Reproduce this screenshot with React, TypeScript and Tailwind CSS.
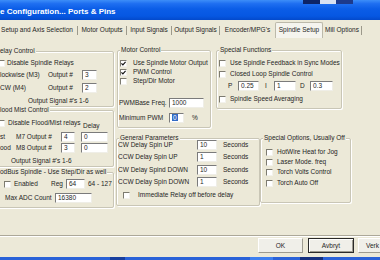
import type { ReactNode } from 'react';

function Check({ checked = false, className = '' }: { checked?: boolean; className?: string }) {
  return (
    <span
      className={`w-[7px] h-[7px] shrink-0 flex items-center justify-center bg-white border border-t-[#7d7b70] border-l-[#7d7b70] border-r-[#f3f2ec] border-b-[#f3f2ec] ${className}`}
    >
      {checked && (
        <svg width="5" height="5" viewBox="0 0 5 5">
          <path d="M0.4 2.3 L1.9 3.9 L4.6 0.9" stroke="#111" strokeWidth="1.2" fill="none" />
        </svg>
      )}
    </span>
  );
}

function Field({ className = '', children }: { className?: string; children?: ReactNode }) {
  return (
    <span
      className={`h-[10px] shrink-0 bg-white pl-[2px] leading-[8px] whitespace-nowrap overflow-hidden border border-t-[#7b7b7b] border-l-[#7b7b7b] border-r-[#efeee7] border-b-[#efeee7] ${className}`}
    >
      {children}
    </span>
  );
}

function Group({ label, className = '', children }: { label: string; className?: string; children: ReactNode }) {
  return (
    <div
      className={`relative shrink-0 border border-[#c9c6b6] rounded-[2px] shadow-[inset_1px_1px_0_#fff,1px_1px_0_#fff] ${className}`}
    >
      <span className="absolute top-[-5px] left-[2px] px-[1px] bg-[#ece9d8] leading-[8px] whitespace-nowrap">
        {label}
      </span>
      {children}
    </div>
  );
}

function CheckRow({ label, checked = false, className = '', gap = 'ml-[6px]' }: { label: string; checked?: boolean; className?: string; gap?: string }) {
  return (
    <div className={`h-[8px] flex items-center whitespace-nowrap overflow-hidden ${className}`}>
      <Check checked={checked} />
      <span className={gap}>{label}</span>
    </div>
  );
}

const tabs = [
  { name: 'Motor Outputs', w: 'w-[48px]' },
  { name: 'Input Signals', w: 'w-[44px]' },
  { name: 'Output Signals', w: 'w-[47px]' },
];

const delays = [
  { l: 'CW Delay Spin UP', v: '10', m: 'mt-[1px]' },
  { l: 'CCW Delay Spin UP', v: '1', m: 'mt-[2px]' },
  { l: 'CW Delay Spind DOWN', v: '10', m: 'mt-[3px]' },
  { l: 'CCW Delay Spin DOWN', v: '1', m: 'mt-[2px]' },
];

export default function App() {
  return (
    <div className="w-[380px] h-[260px] overflow-hidden relative flex flex-col bg-[#ece9d8] text-[#1e1e1e] text-[6.5px] leading-[8px] font-['Liberation_Sans',Arial,sans-serif]">
      {/* title bar */}
      <div className="h-[20px] shrink-0 relative flex items-center bg-[linear-gradient(180deg,#3d8ef8_0%,#1f6ff1_18%,#0b5de7_45%,#0657e2_80%,#0349cb_100%)]">
        <span className="mt-[3px] text-white font-bold text-[8px] whitespace-nowrap">
          e Configuration... Ports &amp; Pins
        </span>
        <div className="absolute top-0 left-[303px] h-[4px] flex">
          <span className="w-[17px] bg-[#0d2466]" />
          <span className="w-[16px] bg-[#d9e2f2]" />
          <span className="w-[17px] bg-[#1d3a8c]" />
        </div>
      </div>

      {/* tabs */}
      <div className="h-[18px] shrink-0 flex whitespace-nowrap">
        <div className="w-[77px] flex justify-end pr-[4px] pt-[6px]">Setup and Axis Selection</div>
        <span className="w-[1px] h-[9px] mt-[6px] bg-[#9c998b]" />
        {tabs.map((t) => (
          <div key={t.name} className="flex">
            <div className={`${t.w} flex justify-center pt-[6px]`}>{t.name}</div>
            <span className="w-[1px] h-[9px] mt-[6px] bg-[#9c998b]" />
          </div>
        ))}
        <div className="w-[55px] flex justify-center pt-[6px]">Encoder/MPG's</div>
        <div className="w-[48px] mt-[2px] flex justify-center pt-[3px] bg-[#f5f4ee] border-x border-t border-[#bcb9aa] rounded-t-[2px]">
          Spindle Setup
        </div>
        <div className="w-[38px] flex justify-center pt-[6px]">Mill Options</div>
        <span className="w-[1px] h-[9px] mt-[6px] bg-[#9c998b]" />
      </div>

      {/* body */}
      <div className="h-[197px] shrink-0 flex">
        {/* left column */}
        <div className="ml-[-4px] w-[118px] shrink-0 flex flex-col pt-[13px]">
          <Group label="elay Control" className="h-[56px] pl-[3px]">
            <div className="mt-[7px] h-[8px] flex items-center whitespace-nowrap">
              <Check className="ml-[-2px]" />
              <span className="ml-[2px]">Disable Spindle Relays</span>
            </div>
            <div className="mt-[3px] h-[10px] flex items-center whitespace-nowrap">
              <span className="w-[48px]">lockwise (M3)</span>
              <span className="w-[34px]">Output #</span>
              <Field className="w-[15px]">3</Field>
            </div>
            <div className="mt-[3px] h-[10px] flex items-center whitespace-nowrap">
              <span className="w-[48px]">CW (M4)</span>
              <span className="w-[34px]">Output #</span>
              <Field className="w-[15px]">2</Field>
            </div>
            <div className="mt-[4px] ml-[28px] whitespace-nowrap">Output Signal #'s 1-6</div>
          </Group>

          <Group label="lood Mist Control" className="mt-[3px] h-[57px] pl-[3px]">
            <div className="mt-[8px] h-[11px] flex whitespace-nowrap">
              <div className="ml-[-2px] w-[85px] h-[8px] flex items-center">
                <Check />
                <span className="ml-[3px]">Disable Flood/Mist relays</span>
              </div>
              <span className="self-end">Delay</span>
            </div>
            <div className="mt-[2px] h-[10px] flex items-center whitespace-nowrap">
              <span className="w-[16px]">st</span>
              <span className="w-[45px]">M7 Output #</span>
              <Field className="w-[14px]">4</Field>
              <Field className="ml-[6px] w-[27px]">0</Field>
            </div>
            <div className="mt-[1px] h-[10px] flex items-center whitespace-nowrap">
              <span className="w-[16px]">ood</span>
              <span className="w-[45px]">M8 Output #</span>
              <Field className="w-[14px]">3</Field>
              <Field className="ml-[6px] w-[27px]">0</Field>
            </div>
            <div className="mt-[4px] ml-[11px] whitespace-nowrap">Output Signal #'s 1-6</div>
          </Group>

          <Group label="odBus Spindle - Use Step/Dir as well" className="mt-[5px] h-[36px] pl-[3px]">
            <div className="mt-[6px] h-[10px] flex items-center whitespace-nowrap">
              <Check className="ml-[4px]" />
              <span className="ml-[3px] w-[37px]">Enabled</span>
              <span className="w-[15px]">Reg</span>
              <Field className="w-[19px]">64</Field>
              <span className="ml-[3px]">64 - 127</span>
            </div>
            <div className="mt-[4px] h-[10px] flex items-center whitespace-nowrap">
              <span className="ml-[5px] w-[50px]">Max ADC Count</span>
              <Field className="w-[37px]">16380</Field>
            </div>
          </Group>
        </div>

        {/* right area */}
        <div className="ml-[2px] flex flex-col pt-[12px]">
          <div className="flex items-start">
            <Group label="Motor Control" className="ml-[1px] w-[94px] h-[78px] pl-[1px]">
              <div className="mt-[8px] flex flex-col gap-[1px]">
                <CheckRow label="Use Spindle Motor Output" checked className="ml-[1px]" />
                <CheckRow label="PWM Control" checked className="ml-[1px]" />
                <CheckRow label="Step/Dir Motor" className="ml-[1px]" />
              </div>
              <div className="mt-[13px] h-[10px] flex items-center whitespace-nowrap">
                <span className="w-[50px]">PWMBase Freq.</span>
                <Field className="w-[35px]">1000</Field>
              </div>
              <div className="mt-[5px] h-[10px] flex items-center whitespace-nowrap">
                <span className="w-[50px]">Minimum PWM</span>
                <Field className="w-[15px]">
                  <span className="bg-[#316ac5] text-white px-[1px]">0</span>
                </Field>
                <span className="ml-[8px]">%</span>
              </div>
            </Group>

            <Group label="Special Functions" className="ml-[5px] w-[126px] h-[59px] pl-[2px]">
              <CheckRow label="Use Spindle Feedback in Sync Modes" className="mt-[8px]" gap="ml-[4px]" />
              <CheckRow label="Closed Loop Spindle Control" className="mt-[3px]" gap="ml-[4px]" />
              <div className="mt-[3px] h-[10px] flex items-center whitespace-nowrap">
                <span className="ml-[9px] w-[10px]">P</span>
                <Field className="w-[21px]">0.25</Field>
                <span className="ml-[6px] w-[9px]">I</span>
                <Field className="w-[22px]">1</Field>
                <span className="ml-[4px] w-[10px]">D</span>
                <Field className="w-[23px]">0.3</Field>
              </div>
              <CheckRow label="Spindle Speed Averaging" className="mt-[4px]" gap="ml-[4px]" />
            </Group>
          </div>

          <div className="mt-[10px] flex items-start">
            <Group label="General Parameters" className="w-[144px] h-[68px] pl-[1px]">
              {delays.map((r) => (
                <div key={r.l} className={`${r.m} h-[10px] flex items-center whitespace-nowrap`}>
                  <span className="w-[79px]">{r.l}</span>
                  <Field className="w-[20px]">{r.v}</Field>
                  <span className="ml-[6px]">Seconds</span>
                </div>
              ))}
              <div className="mt-[4px] h-[8px] flex items-center whitespace-nowrap">
                <Check className="ml-[5px]" />
                <span className="ml-[8px]">Immediate Relay off before delay</span>
              </div>
            </Group>

            <Group label="Special Options, Usually Off" className="w-[91px] h-[65px] pl-[5px]">
              <CheckRow label="HotWire Heat for Jog" className="mt-[9px]" gap="ml-[4px]" />
              <CheckRow label="Laser Mode. freq" className="mt-[2px]" gap="ml-[4px]" />
              <CheckRow label="Torch Volts Control" className="mt-[2px]" gap="ml-[4px]" />
              <CheckRow label="Torch Auto Off" className="mt-[3px]" gap="ml-[4px]" />
            </Group>
          </div>
        </div>
      </div>

      {/* separator */}
      <div className="h-[1px] shrink-0 bg-[#aca899]" />
      <div className="h-[1px] shrink-0 bg-white" />

      {/* buttons */}
      <div className="h-[20px] shrink-0 flex items-start pt-[1px] whitespace-nowrap">
        <button className="ml-[258px] w-[45px] h-[15px] shrink-0 flex items-center justify-center bg-[#f0efe9] border border-t-[#fff] border-l-[#fff] border-r-[#9d9b90] border-b-[#9d9b90]">
          OK
        </button>
        <button className="ml-[5px] w-[46px] h-[15px] shrink-0 flex items-center justify-center bg-[#f0efe9] border border-[#2a2a2a] shadow-[inset_1px_1px_0_#fff,inset_-1px_-1px_0_#9d9b90]">
          Avbryt
        </button>
        <button className="ml-[4px] w-[22px] h-[15px] shrink-0 flex items-center justify-end pr-[1px] bg-[#f0efe9] border-t border-l border-t-[#fff] border-l-[#fff] border-b border-b-[#9d9b90]">
          Verk
        </button>
      </div>

      {/* taskbar edge */}
      <div className="h-[3px] shrink-0 flex bg-[#2a62d8]">
        <span className="ml-[110px] w-[15px] bg-[#183f9e]" />
        <span className="ml-[125px] w-[23px] bg-[#3d7ff0]" />
        <span className="ml-[27px] w-[23px] bg-[#14307e]" />
      </div>
    </div>
  );
}
